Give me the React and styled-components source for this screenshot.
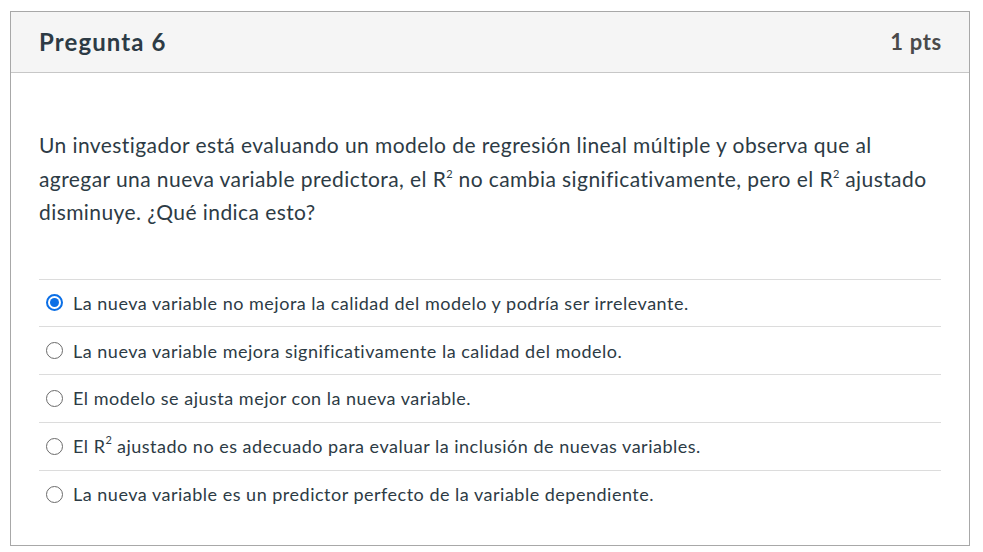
import React from "react";
import styled, { createGlobalStyle } from "styled-components";

const GlobalStyle = createGlobalStyle`
  * { box-sizing: border-box; }
  body {
    margin: 0;
    background: #ffffff;
    font-family: Lato, "Open Sans", sans-serif;
    color: #2d3b45;
  }
`;

const Page = styled.div`
  padding: 11px 13px 0 10px;
`;

const Card = styled.section`
  border: 1px solid #a8a8a8;
  background: #ffffff;
  width: 960px;
`;

const Header = styled.header`
  display: flex;
  justify-content: space-between;
  align-items: center;
  height: 61px;
  padding: 0 27px 2px 28px;
  background: #f5f5f5;
  border-bottom: 1px solid #c7c7c7;
`;

const Title = styled.h2`
  margin: 0;
  font-size: 24px;
  font-weight: 700;
  letter-spacing: 1.1px;
  color: #2d3b45;
`;

const Points = styled.span`
  font-size: 22px;
  font-weight: 700;
  letter-spacing: 0.7px;
  color: #4a4a4a;
`;

const Body = styled.div`
  padding: 55px 28px 27px 28px;
`;

const Question = styled.p`
  margin: 0 0 50px;
  font-size: 21px;
  letter-spacing: 0.42px;
  line-height: 33.5px;
  color: #2d3b45;
`;

const Sup = styled.sup`
  font-size: 11px;
  vertical-align: 9px;
  line-height: 0;
  letter-spacing: 0;
`;

const Answers = styled.div`
  border-top: 1px solid #dcdcdc;
`;

const Answer = styled.label`
  display: flex;
  align-items: center;
  gap: 10px;
  height: 47.75px;
  padding-left: 7px;
  border-bottom: 1px solid #dcdcdc;
  font-size: 18px;
  letter-spacing: 0.5px;
  color: #2d3b45;
  &:last-child {
    border-bottom: none;
  }
`;

const Radio = styled.span`
  flex: none;
  width: 17px;
  height: 17px;
  border-radius: 50%;
  border: ${(p) => (p.checked ? "2px solid #0b6fe6" : "1.5px solid #6b6b6b")};
  display: flex;
  align-items: center;
  justify-content: center;
  &::after {
    content: "";
    display: ${(p) => (p.checked ? "block" : "none")};
    width: 9px;
    height: 9px;
    border-radius: 50%;
    background: #0b6fe6;
  }
`;

const R2 = () => (
  <>
    R<Sup>2</Sup>
  </>
);

const answers = [
  { id: 1, checked: true, text: "La nueva variable no mejora la calidad del modelo y podría ser irrelevante." },
  { id: 2, text: "La nueva variable mejora significativamente la calidad del modelo." },
  { id: 3, text: "El modelo se ajusta mejor con la nueva variable." },
  {
    id: 4,
    text: (
      <>
        El <R2 /> ajustado no es adecuado para evaluar la inclusión de nuevas variables.
      </>
    ),
  },
  { id: 5, text: "La nueva variable es un predictor perfecto de la variable dependiente." },
];

export default function App() {
  return (
    <>
      <GlobalStyle />
      <Page>
        <Card>
          <Header>
            <Title>Pregunta 6</Title>
            <Points>1 pts</Points>
          </Header>
          <Body>
            <Question>
              Un investigador está evaluando un modelo de regresión lineal múltiple y observa que al
              agregar una nueva variable predictora, el <R2 /> no cambia significativamente, pero el{" "}
              <R2 /> ajustado disminuye. ¿Qué indica esto?
            </Question>
            <Answers>
              {answers.map((a) => (
                <Answer key={a.id}>
                  <Radio checked={a.checked} />
                  <span>{a.text}</span>
                </Answer>
              ))}
            </Answers>
          </Body>
        </Card>
      </Page>
    </>
  );
}
